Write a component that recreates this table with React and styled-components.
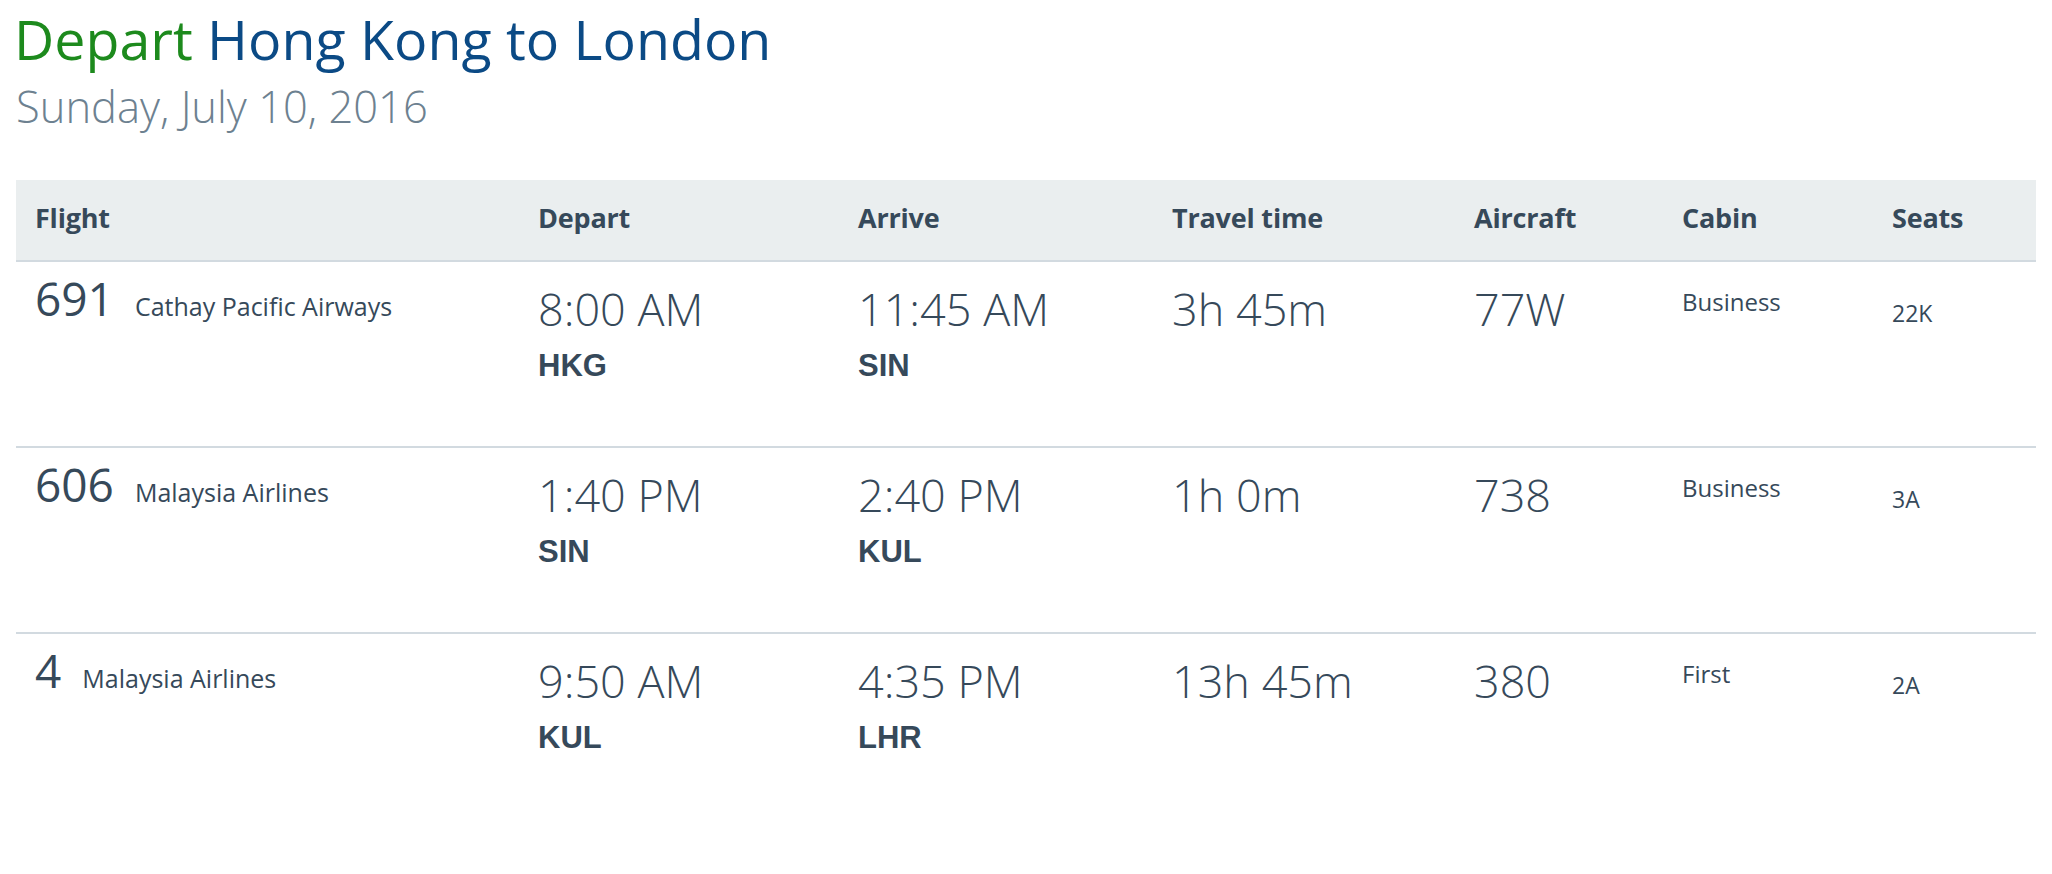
import React from "react"
import styled, { createGlobalStyle } from "styled-components"

const GlobalStyle = createGlobalStyle`
  body {
    margin: 0;
    background: #fff;
    font-family: "Open Sans", "Liberation Sans", sans-serif;
    color: #36495a;
  }
`;

const COLS = "503px 320px 314px 302px 208px 210px 1fr";

const Page = styled.div`
  padding: 0 16px;`;

const Title = styled.h1`
  margin: 11px 0 0 -2px;
  font-size: 55.5px;
  line-height: 1;
  font-weight: 400;
  color: #0b4a85;`;

const Green = styled.span`
  color: #1d8a1d;`;

const Subtitle = styled.h2`
  margin: 18px 0 0 0;
  font-size: 43.5px;
  line-height: 1;
  font-weight: 300;
  color: #6d8190;`;

const Table = styled.div`
  margin-top: 52px;`;

const HeaderRow = styled.div`
  display: grid;
  grid-template-columns: ${COLS};
  background: #eaeeef;
  border-bottom: 2px solid #d2dae0;
  height: 82px;
  box-sizing: border-box;
  padding: 24px 0 0 19px;`;

const HeadCell = styled.div`
  font-size: 27px;
  line-height: 1;
  font-weight: 700;
  letter-spacing: -0.2px;
  color: #36495a;`;

const Row = styled.div`
  display: grid;
  grid-template-columns: ${COLS};
  align-items: start;
  height: 186px;
  box-sizing: border-box;
  padding: 13px 0 0 19px;
  border-bottom: ${p => (p.$last ? "none" : "2px solid #d2dae0")};`;

const FlightCell = styled.div`
  display: flex;
  align-items: baseline;
  gap: 21px;`;

const FlightNo = styled.span`
  font-size: 46px;
  line-height: 1;
  font-weight: 400;`;

const Airline = styled.span`
  font-size: 25px;
  line-height: 1;
  font-weight: 400;`;

const Stack = styled.div`
  display: flex;
  flex-direction: column;
  margin-top: 11px;`;

const Big = styled.div`
  font-size: 45px;
  line-height: 1;
  font-weight: 300;
  margin-top: ${p => p.$offset || 0}px;`;

const Code = styled.div`
  margin-top: 19px;
  font-family: "Liberation Sans", Arial, sans-serif;
  font-size: 31px;
  line-height: 1;
  font-weight: 700;`;

const Small = styled.div`
  font-size: ${p => p.$size}px;
  line-height: 1;
  font-weight: 400;
  margin-top: ${p => p.$offset}px;`;

const flights = [
  { no: "691", airline: "Cathay Pacific Airways", dep: "8:00 AM", from: "HKG", arr: "11:45 AM", to: "SIN", time: "3h 45m", craft: "77W", cabin: "Business", seat: "22K" },
  { no: "606", airline: "Malaysia Airlines", dep: "1:40 PM", from: "SIN", arr: "2:40 PM", to: "KUL", time: "1h 0m", craft: "738", cabin: "Business", seat: "3A" },
  { no: "4", airline: "Malaysia Airlines", dep: "9:50 AM", from: "KUL", arr: "4:35 PM", to: "LHR", time: "13h 45m", craft: "380", cabin: "First", seat: "2A" },
];

const heads = ["Flight", "Depart", "Arrive", "Travel time", "Aircraft", "Cabin", "Seats"];

const App = () => {
  return (
    <>
      <GlobalStyle />
      <Page>
        <Title><Green>Depart</Green> Hong Kong to London</Title>
        <Subtitle>Sunday, July 10, 2016</Subtitle>
        <Table>
          <HeaderRow>
            {heads.map(h => <HeadCell key={h}>{h}</HeadCell>)}
          </HeaderRow>
          {flights.map((f, i) => (
            <Row key={f.no} $last={i === flights.length - 1}>
              <FlightCell>
                <FlightNo>{f.no}</FlightNo>
                <Airline>{f.airline}</Airline>
              </FlightCell>
              <Stack>
                <Big>{f.dep}</Big>
                <Code>{f.from}</Code>
              </Stack>
              <Stack>
                <Big>{f.arr}</Big>
                <Code>{f.to}</Code>
              </Stack>
              <Big $offset={11}>{f.time}</Big>
              <Big $offset={11}>{f.craft}</Big>
              <Small $size={24} $offset={15}>{f.cabin}</Small>
              <Small $size={23} $offset={27}>{f.seat}</Small>
            </Row>
          ))}
        </Table>
      </Page>
    </>
  )
}

export default App;
